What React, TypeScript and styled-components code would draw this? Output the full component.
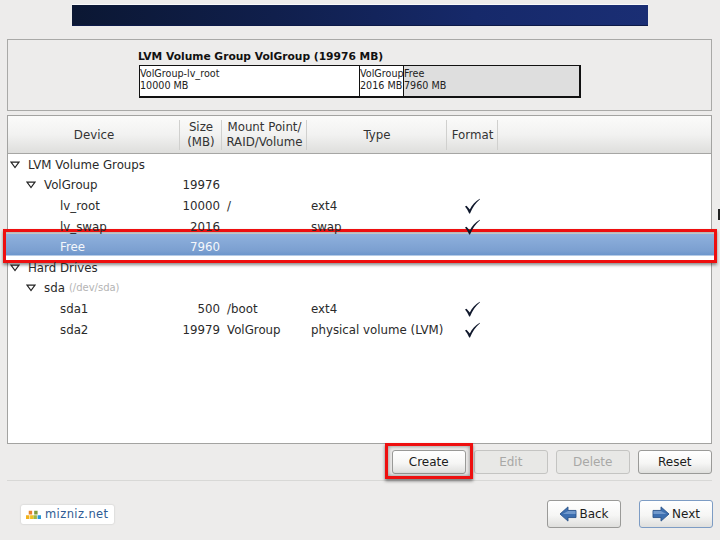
import React from "react"
import styled, { createGlobalStyle } from "styled-components"

const GlobalStyle = createGlobalStyle`
  html, body {
    margin: 0;
    padding: 0;
    background: #edeceb;
  }
  * {
    box-sizing: border-box;
  }
`

const Page = styled.div`
  position: relative;
  width: 720px;
  height: 540px;
  overflow: hidden;
  padding: 5px 8px 0 7px;
  background: #edeceb;
  color: #1a1a1a;
  font-family: "DejaVu Sans", sans-serif;
  font-size: 11.8px;
`

const Banner = styled.div`
  width: 576px;
  height: 21px;
  margin: 0 0 13px 65px;
  border-bottom: 1px solid #0d1a48;
  background: linear-gradient(90deg, #0b1733 0%, #101f4c 35%, #16296a 70%, #1a2e74 100%);
  box-shadow: 0 -1px 0 #fafafa;
`

const GroupPanel = styled.section`
  height: 72px;
  margin-bottom: 4px;
  padding: 11px 0 0 131px;
  border: 1px solid #a9a9a7;
  background: #edeceb;
`

const GroupTitle = styled.div`
  height: 14px;
  margin-left: -1px;
  font-size: 10.7px;
  font-weight: bold;
  line-height: 12px;
  color: #111;
`

const UsageBar = styled.div`
  display: flex;
  width: 442px;
  height: 33px;
  border: 1px solid #111;
  border-right-width: 2px;
  border-bottom-width: 2px;
  background: #fff;
`

const Segment = styled.div<{ $width: number; $free?: boolean }>`
  flex: none;
  width: ${(p) => p.$width}px;
  padding: 2px 0 0 0;
  border-right: ${(p) => (p.$free ? "0" : "1px solid #111")};
  background: ${(p) => (p.$free ? "#dedede" : "#fff")};
  font-size: 9.6px;
  line-height: 12px;
  white-space: nowrap;
  color: #222;
`

const TablePanel = styled.section`
  height: 329px;
  border: 1px solid #a3a3a1;
  background: #fff;
`

const HeaderRow = styled.div`
  display: grid;
  grid-template-columns: 172px 42px 85px 140px 51px 1fr;
  height: 38px;
  padding: 4px 0 3px;
  border-bottom: 1px solid #a6a6a4;
  background: linear-gradient(180deg, #fbfbfa 0%, #f2f2f1 50%, #dededc 100%);
`

const HeaderCell = styled.div`
  display: flex;
  align-items: center;
  justify-content: center;
  padding-left: 1px;
  border-right: 1px solid #d0d0ce;
  color: #333;
  line-height: 15px;
  text-align: center;
  white-space: pre-line;
  &:last-child {
    border-right: 0;
  }
`

const Body = styled.div`
  display: flex;
  flex-direction: column;
  padding-top: 0.5px;
`

const Row = styled.div<{ $selected?: boolean }>`
  position: relative;
  display: grid;
  grid-template-columns: 171px 42px 85px 140px 51px 1fr;
  align-items: center;
  height: 20.6px;
  line-height: 20px;
  color: ${(p) => (p.$selected ? "#f4f7fb" : "#2a2a2a")};
`

const TreeCell = styled.div<{ $level: number }>`
  position: relative;
  z-index: 1;
  display: flex;
  align-items: center;
  padding-left: ${(p) => [20, 36, 52][p.$level]}px;
  white-space: nowrap;
`

const Expander = styled.svg`
  position: absolute;
  top: 6px;
  width: 10px;
  height: 8px;
  margin-left: -18px;
  fill: none;
  stroke: #222;
  stroke-width: 1.2;
`

const Hint = styled.span`
  margin-left: 4px;
  color: #b4b4b4;
  font-size: 10px;
`

const SizeCell = styled.div`
  position: relative;
  z-index: 1;
  padding-right: 1px;
  text-align: right;
`

const TextCell = styled.div`
  position: relative;
  z-index: 1;
  padding-left: 6px;
  white-space: nowrap;
`

const TypeCell = styled(TextCell)`
  padding-left: 5px;
`

const CheckCell = styled.div`
  position: relative;
  z-index: 1;
  display: flex;
  align-items: center;
  padding-left: 18px;
`

const Check = styled.svg`
  width: 16px;
  height: 16px;
  fill: #10182c;
`

const SelectionFrame = styled.div`
  position: absolute;
  top: -8px;
  left: -5px;
  width: 714px;
  height: 34px;
  border: 3.5px solid #ee0f0f;
  background: linear-gradient(180deg, #b4b4b4 0, #c2c4c6 1.5px, #8fb1dd 2px, #7b9fd0 19px, #6d96cc 23px, #fff 24px);
  box-shadow: 0 2px 3px rgba(0, 0, 0, 0.45);
`

const ActionBar = styled.div`
  display: flex;
  justify-content: flex-end;
  gap: 7.5px;
  margin-top: 6px;
  padding-bottom: 6px;
  border-bottom: 1px solid #d8d8d6;
`

const Button = styled.button<{ $focus?: boolean }>`
  display: flex;
  align-items: center;
  justify-content: center;
  width: 74.5px;
  height: 24px;
  padding: 0;
  border: 1px solid ${(p) => (p.$focus ? "#7d9cc4" : "#9a9a98")};
  border-radius: 3px;
  background: linear-gradient(180deg, #ffffff 0%, #f6f6f5 55%, #dfdfdd 100%);
  color: #1c1c1c;
  font-family: "DejaVu Sans", sans-serif;
  font-size: 12px;
  &:disabled {
    border-color: #c4c4c2;
    background: #e8e8e6;
    color: #a8a8a6;
  }
`

const CreateWrap = styled.div`
  position: relative;
  display: flex;
  &::before {
    content: "";
    position: absolute;
    inset: -7px -7px -5px -7px;
    border: 3.5px solid #ee0f0f;
    box-shadow: 0 2px 3px rgba(0, 0, 0, 0.5), inset 0 0 4px rgba(0, 0, 0, 0.45);
    pointer-events: none;
  }
`

const Footer = styled.div`
  display: flex;
  align-items: center;
  margin-top: 19px;
`

const Logo = styled.div`
  display: flex;
  align-items: center;
  gap: 4px;
  width: 93px;
  height: 19px;
  margin-left: 14px;
  padding-left: 5px;
  border-radius: 2px;
  background: #fff;
  box-shadow: 0 0 2px rgba(0, 0, 0, 0.2);
`

const LogoText = styled.span`
  color: #2f5b94;
  font-family: "DejaVu Sans", sans-serif;
  font-size: 11.5px;
  letter-spacing: 0.4px;
`

const NavGroup = styled.div`
  display: flex;
  gap: 18px;
  margin-left: auto;
  margin-right: -1px;
`

const NavButton = styled(Button)`
  gap: 2px;
  width: 74px;
  height: 28px;
`

const EdgeMark = styled.div`
  position: absolute;
  top: 209px;
  right: 0;
  width: 2px;
  height: 11px;
  background: #222;
`

const ArrowIcon: React.FC<{ flip?: boolean }> = ({ flip }) => (
  <svg width="18" height="16" viewBox="0 0 20 18" style={flip ? { transform: "scaleX(-1)" } : undefined}>
    <path d="M1 9 L10 1 V5 H19 V13 H10 V17 Z" fill="#3d6fb0" stroke="#2a5288" strokeWidth="1" />
    <path d="M10 5.5 H18.5 V9 H4 Z" fill="#7199cc" />
  </svg>
)

const Tick = () => (
  <Check viewBox="0 0 16 16">
    <path d="M1 8.5 L2.5 7.8 L5.8 11.5 C8 7 11 3.5 15.8 0.8 L16 1.2 C11.5 5 8.5 9.5 6 15.4 L5.2 15.4 C4 12.5 2.5 10.5 1 8.5 Z" />
  </Check>
)

const Arrow = () => (
  <Expander viewBox="0 0 10 8">
    <path d="M1 1.2 H9 L5 6.5 Z" />
  </Expander>
)

const columns = ["Device", "Size\n(MB)", "Mount Point/\nRAID/Volume", "Type", "Format"]

interface Entry {
  level: number
  name: string
  hint?: string
  open?: boolean
  size?: string
  mount?: string
  type?: string
  format?: boolean
  selected?: boolean
}

const rows: Entry[] = [
  { level: 0, name: "LVM Volume Groups", open: true },
  { level: 1, name: "VolGroup", open: true, size: "19976" },
  { level: 2, name: "lv_root", size: "10000", mount: "/", type: "ext4", format: true },
  { level: 2, name: "lv_swap", size: "2016", type: "swap", format: true },
  { level: 2, name: "Free", size: "7960", selected: true },
  { level: 0, name: "Hard Drives", open: true },
  { level: 1, name: "sda", hint: "(/dev/sda)", open: true },
  { level: 2, name: "sda1", size: "500", mount: "/boot", type: "ext4", format: true },
  { level: 2, name: "sda2", size: "19979", mount: "VolGroup", type: "physical volume (LVM)", format: true },
]

export default function App() {
  return (
    <Page>
      <GlobalStyle />
      <Banner />
      <GroupPanel>
        <GroupTitle>LVM Volume Group VolGroup (19976 MB)</GroupTitle>
        <UsageBar>
          <Segment $width={220}>
            VolGroup-lv_root
            <br />
            10000 MB
          </Segment>
          <Segment $width={44}>
            VolGroup
            <br />
            2016 MB
          </Segment>
          <Segment $width={175} $free>
            Free
            <br />
            7960 MB
          </Segment>
        </UsageBar>
      </GroupPanel>

      <TablePanel>
        <HeaderRow>
          {columns.map((c) => (
            <HeaderCell key={c}>{c}</HeaderCell>
          ))}
          <HeaderCell />
        </HeaderRow>
        <Body>
          {rows.map((r) => (
            <Row key={r.name} $selected={r.selected}>
              {r.selected && <SelectionFrame />}
              <TreeCell $level={r.level}>
                {r.open && <Arrow />}
                {r.name}
                {r.hint && <Hint>{r.hint}</Hint>}
              </TreeCell>
              <SizeCell>{r.size}</SizeCell>
              <TextCell>{r.mount}</TextCell>
              <TypeCell>{r.type}</TypeCell>
              <CheckCell>{r.format && <Tick />}</CheckCell>
            </Row>
          ))}
        </Body>
      </TablePanel>

      <ActionBar>
        <CreateWrap>
          <Button>Create</Button>
        </CreateWrap>
        <Button disabled>Edit</Button>
        <Button disabled>Delete</Button>
        <Button>Reset</Button>
      </ActionBar>

      <Footer>
        <Logo>
          <svg width="15" height="9" viewBox="0 0 22 12" preserveAspectRatio="none">
            <rect x="0" y="7" width="5" height="5" fill="#f2b21c" />
            <rect x="4" y="1" width="5" height="5" fill="#e8822a" />
            <rect x="6" y="7" width="5" height="5" fill="#f0c020" />
            <rect x="12" y="1" width="5" height="5" fill="#7d9a3c" />
            <rect x="11" y="7" width="5" height="5" fill="#9db845" />
            <rect x="17" y="7" width="5" height="5" fill="#2a9ad6" />
          </svg>
          <LogoText>mizniz.net</LogoText>
        </Logo>
        <NavGroup>
          <NavButton>
            <ArrowIcon />
            Back
          </NavButton>
          <NavButton $focus>
            <ArrowIcon flip />
            Next
          </NavButton>
        </NavGroup>
      </Footer>
      <EdgeMark />
    </Page>
  )
}
